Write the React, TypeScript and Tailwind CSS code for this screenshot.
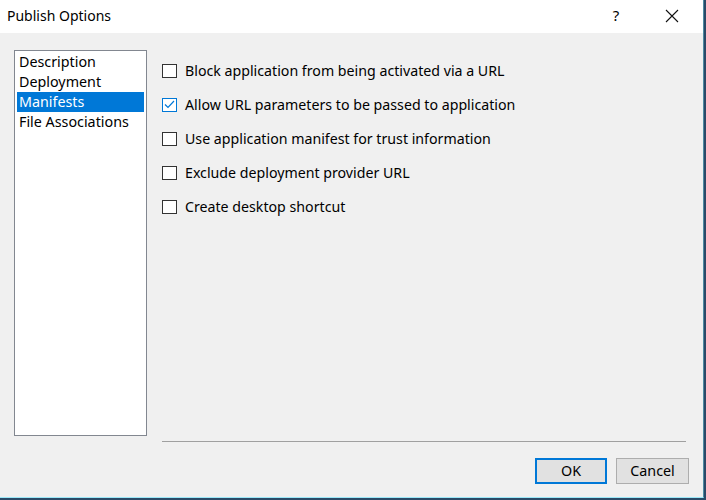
import React from "react";

const items = ["Description", "Deployment", "Manifests", "File Associations"];
const options = [
  { label: "Block application from being activated via a URL", checked: false },
  { label: "Allow URL parameters to be passed to application", checked: true },
  { label: "Use application manifest for trust information", checked: false },
  { label: "Exclude deployment provider URL", checked: false },
  { label: "Create desktop shortcut", checked: false },
];

function Box({ checked }: { checked: boolean }) {
  return (
    <div
      className={
        checked
          ? "w-[15px] h-[14px] border border-[#0078d7] bg-white flex items-center justify-center"
          : "w-[15px] h-[14px] border border-[#333333] bg-white"
      }
    >
      {checked && (
        <svg width="11" height="9" viewBox="0 0 11 9">
          <path d="M1 4.5 L4 7.5 L10 1" fill="none" stroke="#0078d7" strokeWidth="1.2" />
        </svg>
      )}
    </div>
  );
}

export default function App() {
  return (
    <div
      className="w-[706px] h-[500px] bg-[#2a4a68] overflow-hidden"
      style={{ fontFamily: '"Noto Sans", "Open Sans", sans-serif' }}
    >
      <div className="w-[704px] h-[498px] bg-[#f0f0f0] border-r border-b border-r-[#4f8ba3] border-b-[#9ce8f8] flex flex-col">
        <div className="h-[33px] bg-white flex items-center pl-[7px] text-[14px] text-black">
          <span className="flex-1 mb-[2px]">Publish Options</span>
          <span className="w-[20px] text-center mr-[39px] text-[15px] mb-[2px]">?</span>
          <svg width="14" height="14" viewBox="0 0 14 14" className="mr-[24px] mb-[2px]">
            <path d="M1 1 L13 13 M13 1 L1 13" stroke="#111" strokeWidth="1.1" />
          </svg>
        </div>
        <div className="flex flex-1 pt-[17px]">
          <div className="ml-[14px] w-[133px] h-[386px] bg-white border border-[#828790] pt-[1px] px-[2px]">
            {items.map((it) => (
              <div
                key={it}
                className={
                  it === "Manifests"
                    ? "h-[20px] leading-[19px] px-[2px] text-[14.3px] bg-[#0078d7] text-white"
                    : "h-[20px] leading-[19px] px-[2px] text-[14.3px] text-black"
                }
              >
                {it}
              </div>
            ))}
          </div>
          <div className="flex-1 flex flex-col ml-[15px] mr-[17px]">
            <div className="flex flex-col gap-[17px] pt-[12px] flex-1">
              {options.map((o) => (
                <div key={o.label} className="flex items-center h-[17px] gap-[8px] text-[14.2px] text-black">
                  <Box checked={o.checked} />
                  <span>{o.label}</span>
                </div>
              ))}
            </div>
            <div className="h-px bg-[#a0a0a0] mb-[16px] mt-[0px]" />
            <div className="flex justify-end gap-[9px] mb-[13px] mr-[-3px]">
              <button className="w-[72px] h-[26px] border-2 border-[#0078d7] bg-[#e1e1e1] text-[14.3px] text-black">
                OK
              </button>
              <button className="w-[73px] h-[26px] border border-[#adadad] bg-[#e1e1e1] text-[14.3px] text-black">
                Cancel
              </button>
            </div>
          </div>
        </div>
      </div>
    </div>
  );
}
